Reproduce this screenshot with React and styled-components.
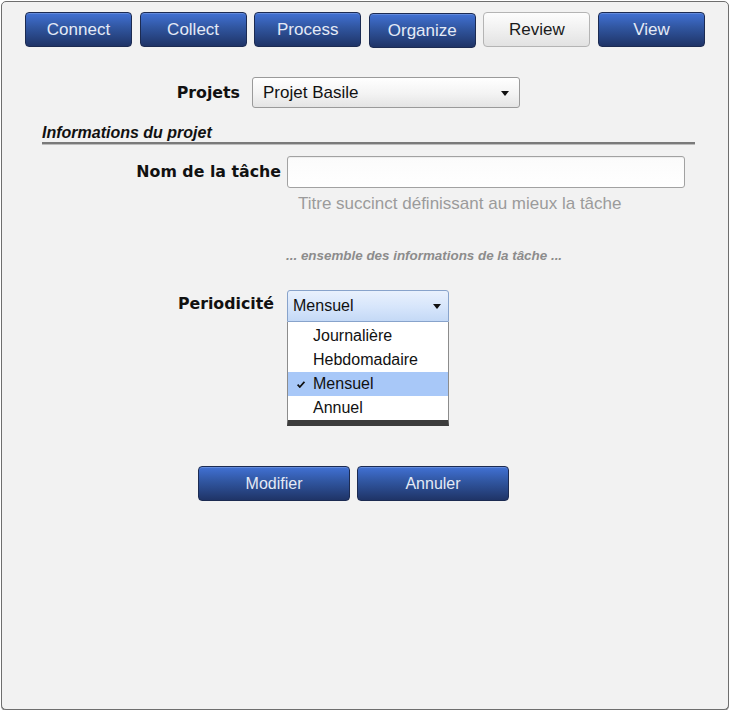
import React from "react";
import styled, { createGlobalStyle } from "styled-components";

const GlobalStyle = createGlobalStyle`
  html, body {
    margin: 0;
    padding: 0;
    background: #ffffff;
  }
  body {
    font-family: "Liberation Sans", Arial, sans-serif;
    color: #111;
  }
`;

const Frame = styled.div`
  box-sizing: border-box;
  width: 728px;
  height: 709px;
  margin: 1px 0 0 1px;
  padding-top: 10px;
  background: #f2f2f2;
  border: 1px solid #6e6e6e;
  border-radius: 5px;
  box-shadow: 0 1px 0 #8a8a8a;
`;

const NavBar = styled.nav`
  display: flex;
  gap: 7.6px;
  padding-left: 23px;
`;

const blueButton = `
  border: 1px solid #1c2b52;
  background: linear-gradient(#4171d4 0%, #30559f 45%, #1f3467 100%);
  color: #e4eaf6;
  box-shadow: inset 0 1px 0 rgba(255, 255, 255, 0.18);
`;

const greyButton = `
  border: 1px solid #b4b4b4;
  background: linear-gradient(#fdfdfd 0%, #f0f0f0 50%, #e2e2e2 100%);
  color: #1b1b1b;
`;

const NavButton = styled.button`
  box-sizing: border-box;
  width: 107px;
  height: 35px;
  margin-top: ${(p) => (p.$pressed ? "1px" : "0")};
  padding: 0;
  border-radius: 4px;
  font-family: "Liberation Sans", Arial, sans-serif;
  font-size: 17px;
  ${(p) => (p.$current ? greyButton : blueButton)}
`;

const Content = styled.div`
  padding: 0 33px 0 40px;
`;

const Row = styled.div`
  display: flex;
  align-items: center;
  gap: ${(p) => p.$gap}px;
  margin-top: ${(p) => p.$top}px;
`;

const Label = styled.label`
  box-sizing: border-box;
  width: ${(p) => p.$width}px;
  margin-bottom: ${(p) => p.$lift || 0}px;
  text-align: right;
  font-family: "DejaVu Sans", Verdana, sans-serif;
  font-weight: bold;
  font-size: 15.8px;
  line-height: 20px;
  color: #111;
`;

const SelectWrap = styled.div`
  position: relative;
  width: ${(p) => p.$width}px;
`;

const SelectBox = styled.div`
  box-sizing: border-box;
  height: ${(p) => p.$height}px;
  display: flex;
  align-items: center;
  justify-content: space-between;
  padding: 0 ${(p) => p.$padRight}px 0 ${(p) => p.$padLeft}px;
  border: 1px solid ${(p) => (p.$open ? "#88a3cb" : "#9a9a9a")};
  border-radius: ${(p) => (p.$open ? "3px 3px 0 0" : "3px")};
  background: ${(p) =>
    p.$open
      ? "linear-gradient(#e9f1fd 0%, #d6e5fb 55%, #c4d9f6 100%)"
      : "linear-gradient(#ffffff 0%, #f3f3f3 55%, #e4e4e4 100%)"};
  font-size: ${(p) => p.$size}px;
  color: #111;
`;

const Arrow = styled.span`
  width: 0;
  height: 0;
  margin-top: 1px;
  border-left: 4px solid transparent;
  border-right: 4px solid transparent;
  border-top: 5px solid #111;
`;

const Menu = styled.ul`
  position: absolute;
  top: 100%;
  left: 0;
  box-sizing: border-box;
  width: 100%;
  margin: 0;
  padding: 2px 0 0;
  list-style: none;
  background: #ffffff;
  border-left: 1px solid #8c8c8c;
  border-right: 1px solid #8c8c8c;
  border-bottom: 6px solid #3c3c3c;
  z-index: 2;
`;

const MenuItem = styled.li`
  position: relative;
  height: 24px;
  line-height: 24px;
  padding-left: 25px;
  font-size: 16px;
  color: #111;
  background: ${(p) => (p.$selected ? "#a8c8f8" : "transparent")};
`;

const Check = styled.svg`
  position: absolute;
  left: 9px;
  top: 9px;
`;

const SectionTitle = styled.h2`
  margin: 15px 0 0;
  font-size: 16px;
  line-height: 19px;
  font-weight: bold;
  font-style: italic;
  color: #111;
`;

const Rule = styled.div`
  height: 2px;
  background: #7a7a7a;
  border-bottom: 1px solid #bcbcbc;
`;

const TextInput = styled.input`
  box-sizing: border-box;
  width: 398px;
  height: 32px;
  padding: 0 8px;
  border: 1px solid #a2a2a2;
  border-radius: 3px;
  background: linear-gradient(#fbfbfb, #ffffff);
  box-shadow: inset 0 1px 1px rgba(0, 0, 0, 0.06);
  font-family: "Liberation Sans", Arial, sans-serif;
  font-size: 16px;
  outline: none;
`;

const Hint = styled.p`
  margin: 6px 0 0 256px;
  font-size: 17px;
  line-height: 20px;
  color: #9b9b9b;
`;

const Placeholder = styled.p`
  margin: 34px 0 0 244px;
  font-size: 13.4px;
  line-height: 16px;
  font-weight: bold;
  font-style: italic;
  color: #8c8c8c;
`;

const Actions = styled.div`
  display: flex;
  gap: 7px;
  margin: 144px 0 0 156px;
`;

const ActionButton = styled.button`
  box-sizing: border-box;
  width: 152px;
  height: 35px;
  padding: 0;
  border-radius: 4px;
  font-family: "Liberation Sans", Arial, sans-serif;
  font-size: 16px;
  ${blueButton}
`;

const navItems = ["Connect", "Collect", "Process", "Organize", "Review", "View"];
const periods = ["Journalière", "Hebdomadaire", "Mensuel", "Annuel"];

export default function App() {
  return (
    <>
      <GlobalStyle />
      <Frame>
        <NavBar>
          {navItems.map((item) => (
            <NavButton
              key={item}
              $current={item === "Review"}
              $pressed={item === "Organize"}
            >
              {item}
            </NavButton>
          ))}
        </NavBar>

        <Content>
          <Row $gap={12} $top={29}>
            <Label $width={198}>Projets</Label>
            <SelectWrap $width={268}>
              <SelectBox $height={31} $padLeft={10} $padRight={10} $size={17}>
                Projet Basile
                <Arrow />
              </SelectBox>
            </SelectWrap>
          </Row>

          <SectionTitle>Informations du projet</SectionTitle>
          <Rule />

          <Row $gap={6} $top={11}>
            <Label $width={239}>Nom de la tâche</Label>
            <TextInput type="text" />
          </Row>
          <Hint>Titre succinct définissant au mieux la tâche</Hint>

          <Placeholder>... ensemble des informations de la tâche ...</Placeholder>

          <Row $gap={13} $top={26}>
            <Label $width={232} $lift={5}>
              Periodicité
            </Label>
            <SelectWrap $width={162}>
              <SelectBox $height={32} $padLeft={5} $padRight={7} $size={16} $open>
                Mensuel
                <Arrow />
              </SelectBox>
              <Menu>
                {periods.map((p) => (
                  <MenuItem key={p} $selected={p === "Mensuel"}>
                    {p === "Mensuel" && (
                      <Check width="8" height="7" viewBox="0 0 8 7">
                        <path
                          d="M0.6 3.6 L2.8 6 L7.4 0.8"
                          fill="none"
                          stroke="#111"
                          strokeWidth="1.7"
                        />
                      </Check>
                    )}
                    {p}
                  </MenuItem>
                ))}
              </Menu>
            </SelectWrap>
          </Row>

          <Actions>
            <ActionButton>Modifier</ActionButton>
            <ActionButton>Annuler</ActionButton>
          </Actions>
        </Content>
      </Frame>
    </>
  );
}
